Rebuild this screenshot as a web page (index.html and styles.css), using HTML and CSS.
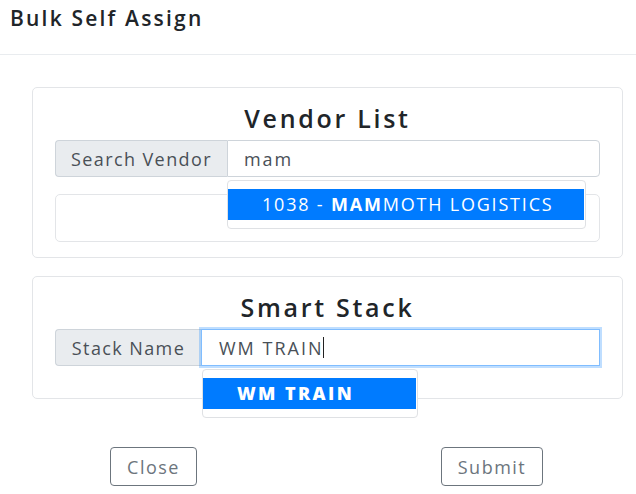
FILE: index.html
```html
<!DOCTYPE html>
<html>
<head>
<meta charset="utf-8">
<link rel="stylesheet" href="styles.css">
</head>
<body>
<div class="modal">
  <div class="modal-header">
    <h5 class="modal-title">Bulk Self Assign</h5>
  </div>
  <div class="modal-body">
    <div class="card">
      <h3 class="card-title">Vendor List</h3>
      <div class="input-group">
        <span class="addon">Search Vendor</span>
        <div class="field-wrap">
          <input class="field" type="text" value="mam">
          <ul class="typeahead vendor-menu">
            <li class="item active">1038 - <b>MAM</b>MOTH LOGISTICS</li>
          </ul>
        </div>
      </div>
      <div class="result-box"></div>
    </div>
    <div class="card">
      <h3 class="card-title">Smart Stack</h3>
      <div class="input-group">
        <span class="addon addon-stack">Stack Name</span>
        <div class="field-wrap">
          <div class="field focused">WM TRAIN<span class="caret"></span></div>
          <ul class="typeahead stack-menu">
            <li class="item active stack-item"><b>WM TRAIN</b></li>
          </ul>
        </div>
      </div>
      <div class="result-empty"></div>
    </div>
  </div>
  <div class="modal-footer">
    <button class="btn btn-close">Close</button>
    <button class="btn btn-submit">Submit</button>
  </div>
</div>
</body>
</html>
```
FILE: styles.css
```css
* { box-sizing: border-box; }
html, body { margin: 0; padding: 0; background: #fff; }
body {
  font-family: "Open Sans", "Noto Sans", "DejaVu Sans", sans-serif;
  color: #212529;
}
.modal { width: 636px; height: 494px; overflow: hidden; }
.modal-header {
  height: 55px;
  border-bottom: 1px solid #e9ecef;
  padding: 4px 0 0 10px;
}
.modal-title {
  margin: 0;
  font-size: 21px;
  font-weight: 600;
  letter-spacing: 2.2px;
  line-height: 28px;
  color: #212529;
}
.modal-body { padding: 32px 13px 0 32px; }
.card {
  border: 1px solid #e3e5e8;
  border-radius: 5px;
  padding: 14px 22px 15px 22px;
  margin-bottom: 18px;
}
.card-title {
  margin: 0 0 6px 0;
  text-align: center;
  font-size: 25px;
  font-weight: 600;
  letter-spacing: 2.7px;
  line-height: 32px;
  color: #212529;
}
.input-group { display: flex; height: 37px; }
.addon {
  width: 172px;
  flex: none;
  display: flex;
  align-items: center;
  justify-content: center;
  background: #e9ecef;
  border: 1px solid #ced4da;
  border-right: none;
  border-radius: 4px 0 0 4px;
  font-size: 18px;
  letter-spacing: 1.4px;
  color: #495057;
}
.addon-stack { width: 146px; }
.field-wrap { flex: 1; position: relative; }
.field {
  width: 100%;
  height: 37px;
  border: 1px solid #ced4da;
  border-radius: 0 4px 4px 0;
  padding: 0 16px;
  font-family: inherit;
  font-size: 18px;
  letter-spacing: 1.9px;
  color: #495057;
  outline: none;
  display: flex;
  align-items: center;
}
.field.focused {
  border-color: #80bdff;
  box-shadow: 0 0 0 2px rgba(0, 123, 255, 0.25);
  border-radius: 0;
  padding-left: 17px;
  letter-spacing: 2px;
}
.caret {
  display: inline-block;
  width: 1px;
  height: 21px;
  background: #222;
  margin-left: 0;
}
.typeahead {
  position: absolute;
  top: 40px;
  left: 0;
  margin: 0;
  padding: 8px 0;
  list-style: none;
  background: #fff;
  border: 1px solid #dfe1e4;
  border-radius: 4px;
  z-index: 5;
}
.vendor-menu { width: 359px; }
.stack-menu { width: 216px; left: 1px; }
.item {
  height: 31px;
  line-height: 31px;
  padding-left: 34px;
  font-size: 18px;
  letter-spacing: 1.8px;
  white-space: nowrap;
}
.item.active { background: #007bff; color: #fff; margin-right: 1px; }
.item b { font-weight: 700; }
.stack-item { letter-spacing: 2.4px; }
.stack-item b { font-weight: 800; }
.result-box {
  margin-top: 17px;
  height: 48px;
  border: 1px solid #e3e5e8;
  border-radius: 5px;
}
.result-empty { margin-top: 17px; height: 0; }
.modal-footer {
  display: flex;
  justify-content: space-between;
  padding: 30px 93px 0 110px;
}
.btn {
  height: 39px;
  background: #fff;
  border: 1px solid #6c757d;
  border-radius: 4px;
  color: #6c757d;
  font-family: inherit;
  font-size: 18px;
  letter-spacing: 1.5px;
  padding: 0;
}
.btn-close { width: 87px; }
.btn-submit { width: 102px; }
```
